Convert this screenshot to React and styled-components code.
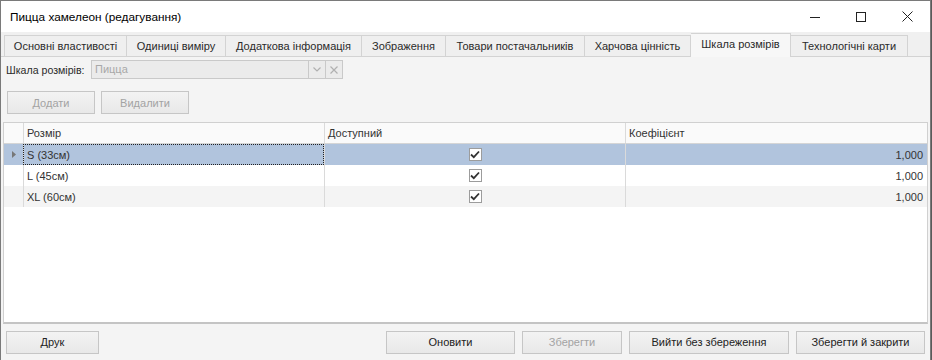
import React from 'react';
import styled, { createGlobalStyle } from 'styled-components';

const GlobalStyle = createGlobalStyle`
  body {
    margin: 0;
    background: #5a5a5a;
    font-family: "Liberation Sans", Arial, sans-serif;
    font-size: 11px;
    color: #1e1e1e;
  }
`;

const Window = styled.div`
  width: 929px;
  height: 359px;
  border: 1px solid #7a7a7a;
  border-bottom: none;
  background: #f4f4f4;
  display: flex;
  flex-direction: column;
  overflow: hidden;
`;

const TitleBar = styled.div`
  height: 31px;
  background: #fff;
  display: flex;
  align-items: center;
  padding-left: 9px;
  font-size: 11.8px;
  color: #000;
`;

const Title = styled.div`
  flex: 1;
`;

const WinButton = styled.div`
  width: 46px;
  height: 31px;
  display: flex;
  align-items: center;
  justify-content: center;
`;

const TabStrip = styled.div`
  display: flex;
  align-items: flex-end;
  height: 24px;
  padding-left: 3px;
  background: #f0f0f0;
  border-bottom: 1px solid #d3d3d3;
`;

const Tab = styled.div`
  height: ${p => (p.$active ? 24 : 21)}px;
  margin-bottom: ${p => (p.$active ? -1 : 0)}px;
  width: ${p => p.$w}px;
  box-sizing: border-box;
  display: flex;
  align-items: center;
  justify-content: center;
  border: 1px solid #d3d3d3;
  border-left: ${p => (p.$first ? '1px solid #d3d3d3' : 'none')};
  border-bottom: none;
  background: ${p => (p.$active ? '#f7f7f7' : '#efefef')};
  padding-bottom: ${p => (p.$active ? 4 : 0)}px;
  color: #2a2a2a;
`;

const Body = styled.div`
  flex: 1;
  display: flex;
  flex-direction: column;
  padding: 3px 2px 0 2px;
`;

const FieldRow = styled.div`
  display: flex;
  align-items: center;
  height: 19px;
  padding-left: 3px;
  color: #2a2a2a;
`;

const Label = styled.span`
  width: 85px;
  flex-shrink: 0;
  white-space: nowrap;
  font-size: 10.6px;
`;

const Combo = styled.div`
  display: flex;
  height: 19px;
  box-sizing: border-box;
  border: 1px solid #c9c9c9;
  background: #ebebeb;
`;

const ComboText = styled.div`
  width: 213px;
  padding-left: 3px;
  line-height: 17px;
  color: #a8a8a8;
`;

const ComboBtn = styled.div`
  width: 16px;
  display: flex;
  align-items: center;
  justify-content: center;
  border-left: 1px solid #c9c9c9;
`;

const ButtonRow = styled.div`
  display: flex;
  gap: 6px;
  padding: 12px 0 0 4px;
  height: 23px;
`;

const Button = styled.div`
  width: ${p => p.$w}px;
  height: 23px;
  box-sizing: border-box;
  border: 1px solid #c6c6c6;
  background: linear-gradient(#f3f3f3, #e8e8e8);
  display: flex;
  align-items: center;
  justify-content: center;
  color: ${p => (p.$disabled ? '#a3a3a3' : '#222')};
`;

const Grid = styled.div`
  margin-top: 8px;
  flex: 1;
  background: #fff;
  border: 1px solid #d0d0d0;
  border-bottom: 2px solid #c4c4c4;
  display: flex;
  flex-direction: column;
`;

const Row = styled.div`
  display: grid;
  grid-template-columns: 19px 301px 301px 1fr;
  height: ${p => (p.$header ? 20 : 21)}px;
  background: ${p => p.$bg || '#fff'};
  border-bottom: ${p => (p.$header ? '1px solid #d5d5d5' : 'none')};
`;

const Cell = styled.div`
  display: flex;
  align-items: center;
  justify-content: ${p => p.$align || 'flex-start'};
  padding: 0 ${p => (p.$align === 'flex-end' ? 4 : 3)}px 0 3px;
  border-left: ${p => (p.$first ? 'none' : '1px solid #dadada')};
  color: #333;
  box-sizing: border-box;
  ${p => p.$focus && 'outline: 1px dotted #222; outline-offset: -1px;'}
`;

const CheckBox = styled.div`
  width: 11px;
  height: 11px;
  border: 1px solid #9c9c9c;
  background: #fff;
  display: flex;
  align-items: center;
  justify-content: center;
`;

const Footer = styled.div`
  height: 36px;
  display: flex;
  align-items: center;
  padding: 0 5px 0 5px;
  gap: 7px;
`;

const Spacer = styled.div`
  flex: 1;
`;

const Check = () => (
  <CheckBox>
    <svg width="10" height="9" viewBox="0 0 10 9">
      <path d="M1 4.5 L3.8 7.2 L9 1.5" fill="none" stroke="#333" strokeWidth="1.8" />
    </svg>
  </CheckBox>
);

const tabs = [
  ['Основні властивості', 123],
  ['Одиниці виміру', 99],
  ['Додаткова інформація', 136],
  ['Зображення', 84],
  ['Товари постачальників', 139],
  ['Харчова цінність', 106],
  ['Шкала розмірів', 100],
  ['Технологічні карти', 117],
];

const rows = [
  { name: 'S (33см)', bg: '#b1c4dd', selected: true },
  { name: 'L (45см)', bg: '#fff' },
  { name: 'XL (60см)', bg: '#f4f4f4' },
];

export default function App() {
  return (
    <>
      <GlobalStyle />
      <Window>
        <TitleBar>
          <Title>Пицца хамелеон (редагування)</Title>
          <WinButton>
            <svg width="10" height="10" viewBox="0 0 10 10">
              <path d="M0 5.5 H10" stroke="#222" strokeWidth="1" />
            </svg>
          </WinButton>
          <WinButton>
            <svg width="10" height="10" viewBox="0 0 10 10">
              <rect x="0.5" y="0.5" width="9" height="9" fill="none" stroke="#222" strokeWidth="1" />
            </svg>
          </WinButton>
          <WinButton>
            <svg width="11" height="11" viewBox="0 0 11 11">
              <path d="M0.5 0.5 L10.5 10.5 M10.5 0.5 L0.5 10.5" stroke="#222" strokeWidth="1" />
            </svg>
          </WinButton>
        </TitleBar>
        <TabStrip>
          {tabs.map(([label, w], i) => (
            <Tab key={label} $w={w} $first={i === 0} $active={label === 'Шкала розмірів'}>
              {label}
            </Tab>
          ))}
        </TabStrip>
        <Body>
          <FieldRow>
            <Label>Шкала розмірів:</Label>
            <Combo>
              <ComboText>Пицца</ComboText>
              <ComboBtn>
                <svg width="8" height="5" viewBox="0 0 8 5">
                  <path d="M0.5 0.5 L4 4 L7.5 0.5" fill="none" stroke="#b0b0b0" strokeWidth="1.2" />
                </svg>
              </ComboBtn>
              <ComboBtn>
                <svg width="8" height="8" viewBox="0 0 8 8">
                  <path d="M0.5 0.5 L7.5 7.5 M7.5 0.5 L0.5 7.5" stroke="#b0b0b0" strokeWidth="1.2" />
                </svg>
              </ComboBtn>
            </Combo>
          </FieldRow>
          <ButtonRow>
            <Button $w={88} $disabled>Додати</Button>
            <Button $w={88} $disabled>Видалити</Button>
          </ButtonRow>
          <Grid>
            <Row $header $bg="#fafafa">
              <Cell $first />
              <Cell>Розмір</Cell>
              <Cell>Доступний</Cell>
              <Cell>Коефіцієнт</Cell>
            </Row>
            {rows.map(r => (
              <Row key={r.name} $bg={r.bg}>
                <Cell $first $align="center">
                  {r.selected && (
                    <svg width="4" height="7" viewBox="0 0 4 7">
                      <path d="M0 0 L4 3.5 L0 7 Z" fill="#777" />
                    </svg>
                  )}
                </Cell>
                <Cell $focus={r.selected}>{r.name}</Cell>
                <Cell $align="center"><Check /></Cell>
                <Cell $align="flex-end">1,000</Cell>
              </Row>
            ))}
          </Grid>
        </Body>
        <Footer>
          <Button $w={93}>Друк</Button>
          <Spacer />
          <Button $w={129}>Оновити</Button>
          <Button $w={100} $disabled>Зберегти</Button>
          <Button $w={160}>Вийти без збереження</Button>
          <Button $w={129}>Зберегти й закрити</Button>
        </Footer>
      </Window>
    </>
  );
}
